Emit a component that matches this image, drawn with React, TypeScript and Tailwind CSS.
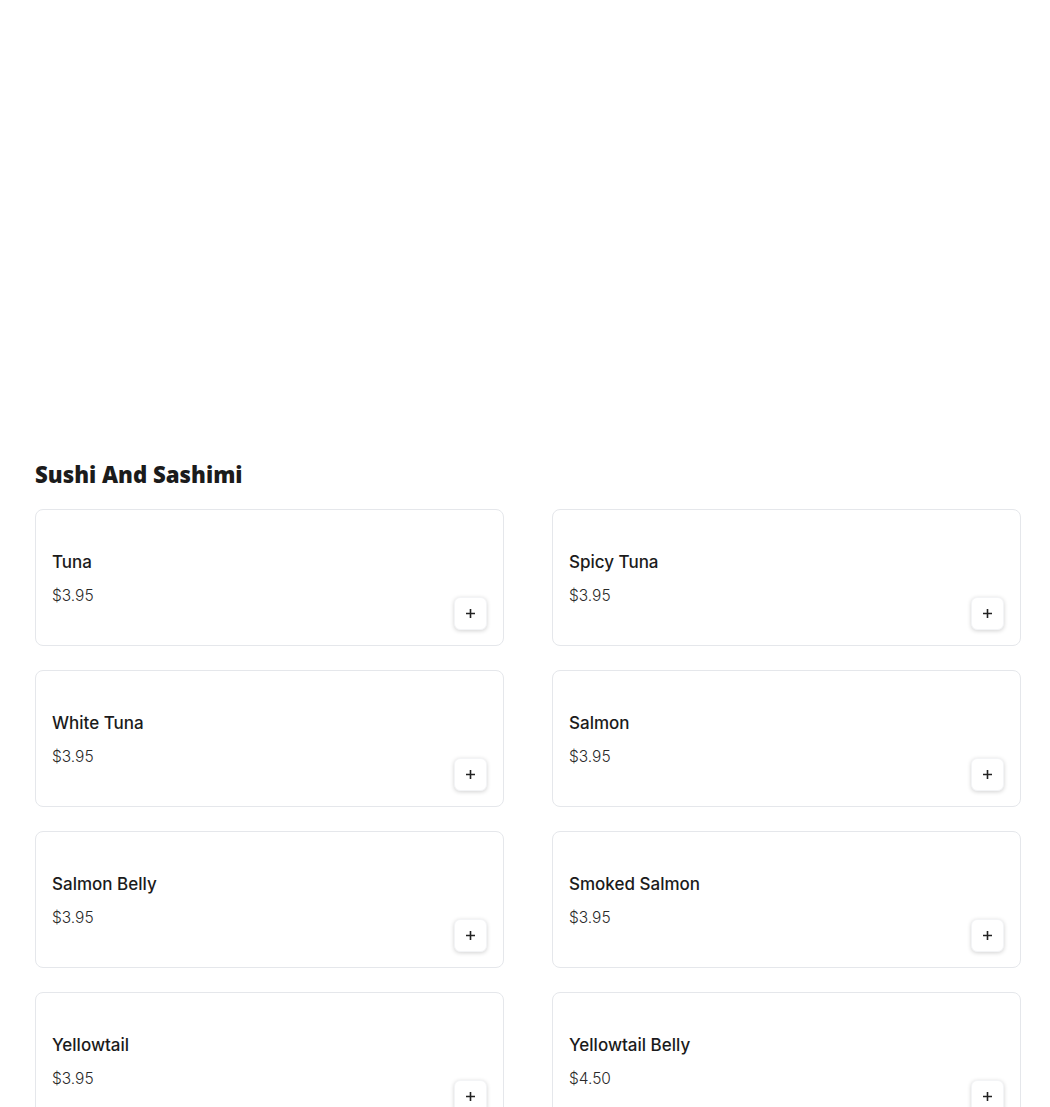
import React from 'react';

type Item = { name: string; price: string };

const items: Item[] = [
  { name: 'Tuna', price: '$3.95' },
  { name: 'Spicy Tuna', price: '$3.95' },
  { name: 'White Tuna', price: '$3.95' },
  { name: 'Salmon', price: '$3.95' },
  { name: 'Salmon Belly', price: '$3.95' },
  { name: 'Smoked Salmon', price: '$3.95' },
  { name: 'Yellowtail', price: '$3.95' },
  { name: 'Yellowtail Belly', price: '$4.50' },
];

const PlusIcon = () => (
  <svg width="11" height="11" viewBox="0 0 11 11" fill="none" stroke="#222" strokeWidth="1.6">
    <path d="M5.5 1v9M1 5.5h9" />
  </svg>
);

const MenuCard: React.FC<Item> = ({ name, price }) => (
  <div className="h-[137px] rounded-lg border border-gray-200 bg-white flex justify-between items-end pl-[16px] pr-[16px] pb-[15px]">
    <div className="self-start pt-[40px]">
      <div className="text-[17px] leading-6 font-medium text-[#1b1b1b]">{name}</div>
      <div className="mt-[10px] text-[15.5px] leading-6 font-light text-[#2a2a2a]">{price}</div>
    </div>
    <button className="w-[33px] h-[33px] rounded-md bg-white border border-gray-100 shadow-[0_1px_4px_rgba(0,0,0,0.18)] flex items-center justify-center">
      <PlusIcon />
    </button>
  </div>
);

export default function App() {
  return (
    <div className="min-h-screen bg-white px-[35px] pt-[459px]" style={{ fontFamily: 'Inter, "Noto Sans", sans-serif' }}>
      <h2 className="text-[22.2px] leading-8 font-extrabold text-[#1b1b1b]" style={{ fontFamily: '"Open Sans", Inter, sans-serif' }}>
        Sushi And Sashimi
      </h2>
      <div className="mt-[18px] grid grid-cols-[469px_469px] gap-x-[48px] gap-y-[24px]">
        {items.map((it) => (
          <MenuCard key={it.name} {...it} />
        ))}
      </div>
    </div>
  );
}
